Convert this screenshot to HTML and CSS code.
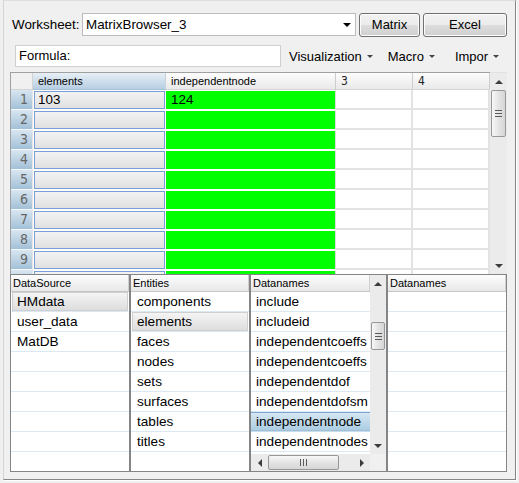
FILE: index.html
```html
<!DOCTYPE html>
<html>
<head>
<meta charset="utf-8">
<link rel="stylesheet" href="styles.css">
</head>
<body>
<div class="frame">
  <div class="row1">
    <span class="lbl">Worksheet:</span>
    <div class="combo"><span class="combo-text">MatrixBrowser_3</span><span class="caret"></span></div>
    <div class="btn btn-matrix">Matrix</div>
    <div class="btn btn-excel">Excel</div>
  </div>
  <div class="row2">
    <div class="formula">Formula:</div>
    <div class="menu m-vis">Visualization<span class="tri"></span></div>
    <div class="menu m-mac">Macro<span class="tri"></span></div>
    <div class="menu m-imp">Impor<span class="tri"></span></div>
  </div>
  <div class="sheet">
    <div class="grid">
      <div class="corner"></div>
      <div class="hd hd-sel">elements</div>
      <div class="hd">independentnode</div>
      <div class="hd hd-num">3</div>
      <div class="hd hd-num">4</div>

      <div class="rh">1</div><div class="ec">103</div><div class="gc">124</div><div class="wc"></div><div class="wc"></div>
      <div class="rh">2</div><div class="ec"></div><div class="gc"></div><div class="wc"></div><div class="wc"></div>
      <div class="rh">3</div><div class="ec"></div><div class="gc"></div><div class="wc"></div><div class="wc"></div>
      <div class="rh">4</div><div class="ec"></div><div class="gc"></div><div class="wc"></div><div class="wc"></div>
      <div class="rh">5</div><div class="ec"></div><div class="gc"></div><div class="wc"></div><div class="wc"></div>
      <div class="rh">6</div><div class="ec"></div><div class="gc"></div><div class="wc"></div><div class="wc"></div>
      <div class="rh">7</div><div class="ec"></div><div class="gc"></div><div class="wc"></div><div class="wc"></div>
      <div class="rh">8</div><div class="ec"></div><div class="gc"></div><div class="wc"></div><div class="wc"></div>
      <div class="rh">9</div><div class="ec"></div><div class="gc"></div><div class="wc"></div><div class="wc"></div>
      <div class="rh"></div><div class="ec"></div><div class="gc"></div><div class="wc"></div><div class="wc"></div>
    </div>
    <div class="vsb">
      <div class="sb-btn"><span class="ar-up"></span></div>
      <div class="thumb-v thumb-sheet"><span class="grip-h"></span></div>
      <div class="sb-fill"></div>
      <div class="sb-btn"><span class="ar-dn"></span></div>
    </div>
  </div>
  <div class="lists">
    <div class="list">
      <div class="list-head">DataSource</div>
      <div class="item sel-gray">HMdata</div>
      <div class="item">user_data</div>
      <div class="item">MatDB</div>
      <div class="item"></div>
      <div class="item"></div>
      <div class="item"></div>
      <div class="item"></div>
      <div class="item"></div>
      <div class="item"></div>
    </div>
    <div class="list">
      <div class="list-head">Entities</div>
      <div class="item">components</div>
      <div class="item sel-gray">elements</div>
      <div class="item">faces</div>
      <div class="item">nodes</div>
      <div class="item">sets</div>
      <div class="item">surfaces</div>
      <div class="item">tables</div>
      <div class="item">titles</div>
      <div class="item"></div>
    </div>
    <div class="list list-dn">
      <div class="dn-main">
        <div class="list-head">Datanames</div>
        <div class="item">include</div>
        <div class="item">includeid</div>
        <div class="item">independentcoeffs</div>
        <div class="item">independentcoeffs</div>
        <div class="item">independentdof</div>
        <div class="item">independentdofsm</div>
        <div class="item sel-blue">independentnode</div>
        <div class="item">independentnodes</div>
      </div>
      <div class="dn-vsb">
        <div class="sb-btn"><span class="ar-up"></span></div>
        <div class="thumb-v thumb-dn"><span class="grip-h"></span></div>
        <div class="sb-fill"></div>
        <div class="sb-btn"><span class="ar-dn"></span></div>
      </div>
      <div class="dn-hsb">
        <div class="sb-hbtn"><span class="ar-lt"></span></div>
        <div class="thumb-h"><span class="grip-v"></span></div>
        <div class="sb-fill"></div>
        <div class="sb-hbtn"><span class="ar-rt"></span></div>
      </div>
      <div class="dn-corner"></div>
    </div>
    <div class="list">
      <div class="list-head">Datanames</div>
      <div class="item"></div>
      <div class="item"></div>
      <div class="item"></div>
      <div class="item"></div>
      <div class="item"></div>
      <div class="item"></div>
      <div class="item"></div>
      <div class="item"></div>
      <div class="item"></div>
    </div>
  </div>
</div>
</body>
</html>
```

FILE: styles.css
```css
* { box-sizing: border-box; }
html, body { margin: 0; padding: 0; }
body {
  background: #f0f0f0;
  font-family: "Liberation Sans", Arial, sans-serif;
  font-size: 13px;
  color: #000;
  width: 519px;
  height: 483px;
  overflow: hidden;
}
.frame {
  margin-left: 3px;
  width: 513px;
  height: 480px;
  border: 1px solid;
  border-color: #dedede #858585 #858585 #d4d4d4;
  box-shadow: 1px 1px 0 #ffffff;
  padding: 11px 8px 7px 6px;
  display: flex;
  flex-direction: column;
}
.row1 {
  height: 25px;
  display: flex;
  align-items: center;
}
.lbl {
  width: 72px;
  padding-left: 2px;
  font-size: 13.4px;
  flex: none;
}
.combo {
  width: 274px;
  height: 23px;
  background: #fff;
  border: 1px solid #bcbcbc;
  display: flex;
  align-items: center;
  padding-left: 3px;
  flex: none;
}
.combo-text { flex: 1; font-size: 13.4px; }
.caret {
  width: 0; height: 0;
  border-left: 4px solid transparent;
  border-right: 4px solid transparent;
  border-top: 4px solid #000;
  margin-right: 4px;
}
.btn {
  height: 24px;
  border: 1px solid #707070;
  border-radius: 3px;
  background: linear-gradient(#f2f2f2 0%, #ebebeb 50%, #dddddd 51%, #cfcfcf 100%);
  display: flex;
  align-items: center;
  justify-content: center;
  flex: none;
  box-shadow: inset 0 0 0 1px #fcfcfc;
}
.btn-matrix { width: 61px; margin-left: 3px; }
.btn-excel { width: 84px; margin-left: 3px; }

.row2 {
  margin-top: 8px;
  height: 22px;
  display: flex;
  align-items: center;
}
.formula {
  margin-left: 5px;
  width: 266px;
  height: 22px;
  background: #fff;
  border: 1px solid #cfcfcf;
  padding-left: 3px;
  line-height: 20px;
  flex: none;
}
.menu {
  display: flex;
  align-items: center;
  gap: 5px;
  flex: none;
}
.m-vis { margin-left: 8px; }
.m-mac { margin-left: 15px; }
.m-imp { margin-left: 20px; }
.tri {
  width: 0; height: 0;
  border-left: 3px solid transparent;
  border-right: 3px solid transparent;
  border-top: 3px solid #444;
}

.sheet {
  margin-top: 5px;
  height: 202px;
  display: flex;
  overflow: hidden;
  flex: none;
}
.grid {
  width: 480px;
  flex: none;
  border-left: 1px solid #a0a0a0;
  border-top: 1px solid #a0a0a0;
  background: #fff;
  display: grid;
  grid-template-columns: 22px 133px 170px 77px 77px;
  grid-template-rows: 17px;
  grid-auto-rows: 20px;
  overflow: hidden;
}
.corner {
  background: #f0f0f0;
  border-right: 1px solid #d4d4d4;
  border-bottom: 1px solid #d4d4d4;
}
.hd {
  background: linear-gradient(#fdfdfd, #e9e9e9);
  border-right: 1px solid #cdcdcd;
  border-bottom: 1px solid #d6d6d6;
  font-size: 11px;
  line-height: 16px;
  padding-left: 5px;
  white-space: nowrap;
  overflow: hidden;
}
.hd-sel {
  background: linear-gradient(#e8eff6, #b7cee2);
  border-right: 1px solid #c5d3e0;
  border-bottom: 1px solid #a9c0d4;
}
.hd-num {
  font-family: "Liberation Sans Narrow", "DejaVu Sans Condensed", "Liberation Sans", sans-serif;
  font-size: 12px;
  color: #222;
}
.rh {
  background: linear-gradient(#d8e6f1, #a2c0d7);
  border-bottom: 1px solid #f4f8fb;
  border-right: 1px solid #e6e6e6;
  text-align: right;
  padding-right: 4px;
  font-family: "Liberation Sans Narrow", "DejaVu Sans Condensed", "Liberation Sans", sans-serif;
  font-size: 14px;
  color: #666;
  line-height: 19px;
}
.ec {
  margin: 1px;
  border: 1px solid #779fd6;
  background: linear-gradient(#f3f3f3, #e0e0e0);
  padding-left: 3px;
  line-height: 16px;
  font-size: 13.4px;
}
.gc {
  background: #00ff00;
  border-top: 1px solid #fff;
  border-bottom: 1px solid #fff;
  border-right: 1px solid #dcdcdc;
  padding-left: 5px;
  line-height: 17px;
  font-size: 13.4px;
}
.wc {
  background: #fff;
  border-right: 2px solid #e3e3e3;
  border-bottom: 2px solid #e3e3e3;
}

.vsb {
  width: 17px;
  flex: none;
  background: #ebebeb;
  border-top: 1px solid #e2e2e2;
  display: flex;
  flex-direction: column;
  align-items: stretch;
}
.sb-btn {
  height: 17px;
  flex: none;
  display: flex;
  align-items: center;
  justify-content: center;
}
.sb-fill { flex: 1; }
.ar-up {
  width: 0; height: 0;
  border-left: 4px solid transparent;
  border-right: 4px solid transparent;
  border-bottom: 4px solid #3c3c3c;
}
.ar-dn {
  width: 0; height: 0;
  border-left: 4px solid transparent;
  border-right: 4px solid transparent;
  border-top: 4px solid #3c3c3c;
}
.ar-lt {
  width: 0; height: 0;
  border-top: 4px solid transparent;
  border-bottom: 4px solid transparent;
  border-right: 4px solid #3c3c3c;
}
.ar-rt {
  width: 0; height: 0;
  border-top: 4px solid transparent;
  border-bottom: 4px solid transparent;
  border-left: 4px solid #3c3c3c;
}
.thumb-v {
  flex: none;
  margin: 0 1px;
  border: 1px solid #979797;
  border-radius: 2px;
  background: linear-gradient(to right, #f7f7f7, #e2e2e2 55%, #d6d6d6);
  display: flex;
  align-items: center;
  justify-content: center;
}
.thumb-sheet { height: 47px; }
.grip-h {
  width: 7px;
  height: 7px;
  background: repeating-linear-gradient(#5a5a5a 0 1px, transparent 1px 3px);
}

.lists {
  height: 198px;
  display: flex;
  flex: none;
}
.list {
  width: 120px;
  flex: none;
  border: 1px solid #858585;
  background: #fff;
  overflow: hidden;
}
.list-head {
  height: 17px;
  background: linear-gradient(#fdfdfd, #e8e8e8);
  border-bottom: 1px solid #c6c6c6;
  border-right: 1px solid #d0d0d0;
  font-size: 11px;
  line-height: 16px;
  padding-left: 2px;
  white-space: nowrap;
  overflow: hidden;
}
.item {
  height: 20px;
  border-bottom: 1px solid #dbe9f5;
  padding-left: 6px;
  line-height: 19px;
  font-size: 13.6px;
  white-space: nowrap;
  overflow: hidden;
}
.sel-gray {
  background: linear-gradient(#f6f6f6, #dcdcdc);
  box-shadow: inset 0 0 0 1px #cfcfcf;
  border-left: 1px solid #fff;
  border-right: 1px solid #fff;
  padding-left: 5px;
}
.sel-blue {
  background: linear-gradient(#d9e8f3, #a9cbe1);
  box-shadow: inset 0 1px 0 #7ea5cf, inset 0 -1px 0 #9fbfd9;
  border-bottom-color: #c9dcec;
}
.list-dn {
  width: 137px;
  display: grid;
  grid-template-columns: 119px 16px;
  grid-template-rows: 179px 17px;
}
.dn-main { overflow: hidden; }
.dn-main .item { padding-left: 5px; }
.dn-vsb {
  background: #ebebeb;
  display: flex;
  flex-direction: column;
}
.thumb-dn { height: 28px; margin-top: 30px; }
.dn-hsb {
  background: #ebebeb;
  display: flex;
  align-items: stretch;
}
.sb-hbtn {
  width: 17px;
  flex: none;
  display: flex;
  align-items: center;
  justify-content: center;
}
.thumb-h {
  width: 71px;
  flex: none;
  margin: 1px 0;
  border: 1px solid #979797;
  border-radius: 2px;
  background: linear-gradient(#f7f7f7, #e2e2e2 55%, #d6d6d6);
  display: flex;
  align-items: center;
  justify-content: center;
}
.grip-v {
  width: 7px;
  height: 7px;
  background: repeating-linear-gradient(to right, #5a5a5a 0 1px, transparent 1px 3px);
}
.dn-corner { background: #f0f0f0; }
```
